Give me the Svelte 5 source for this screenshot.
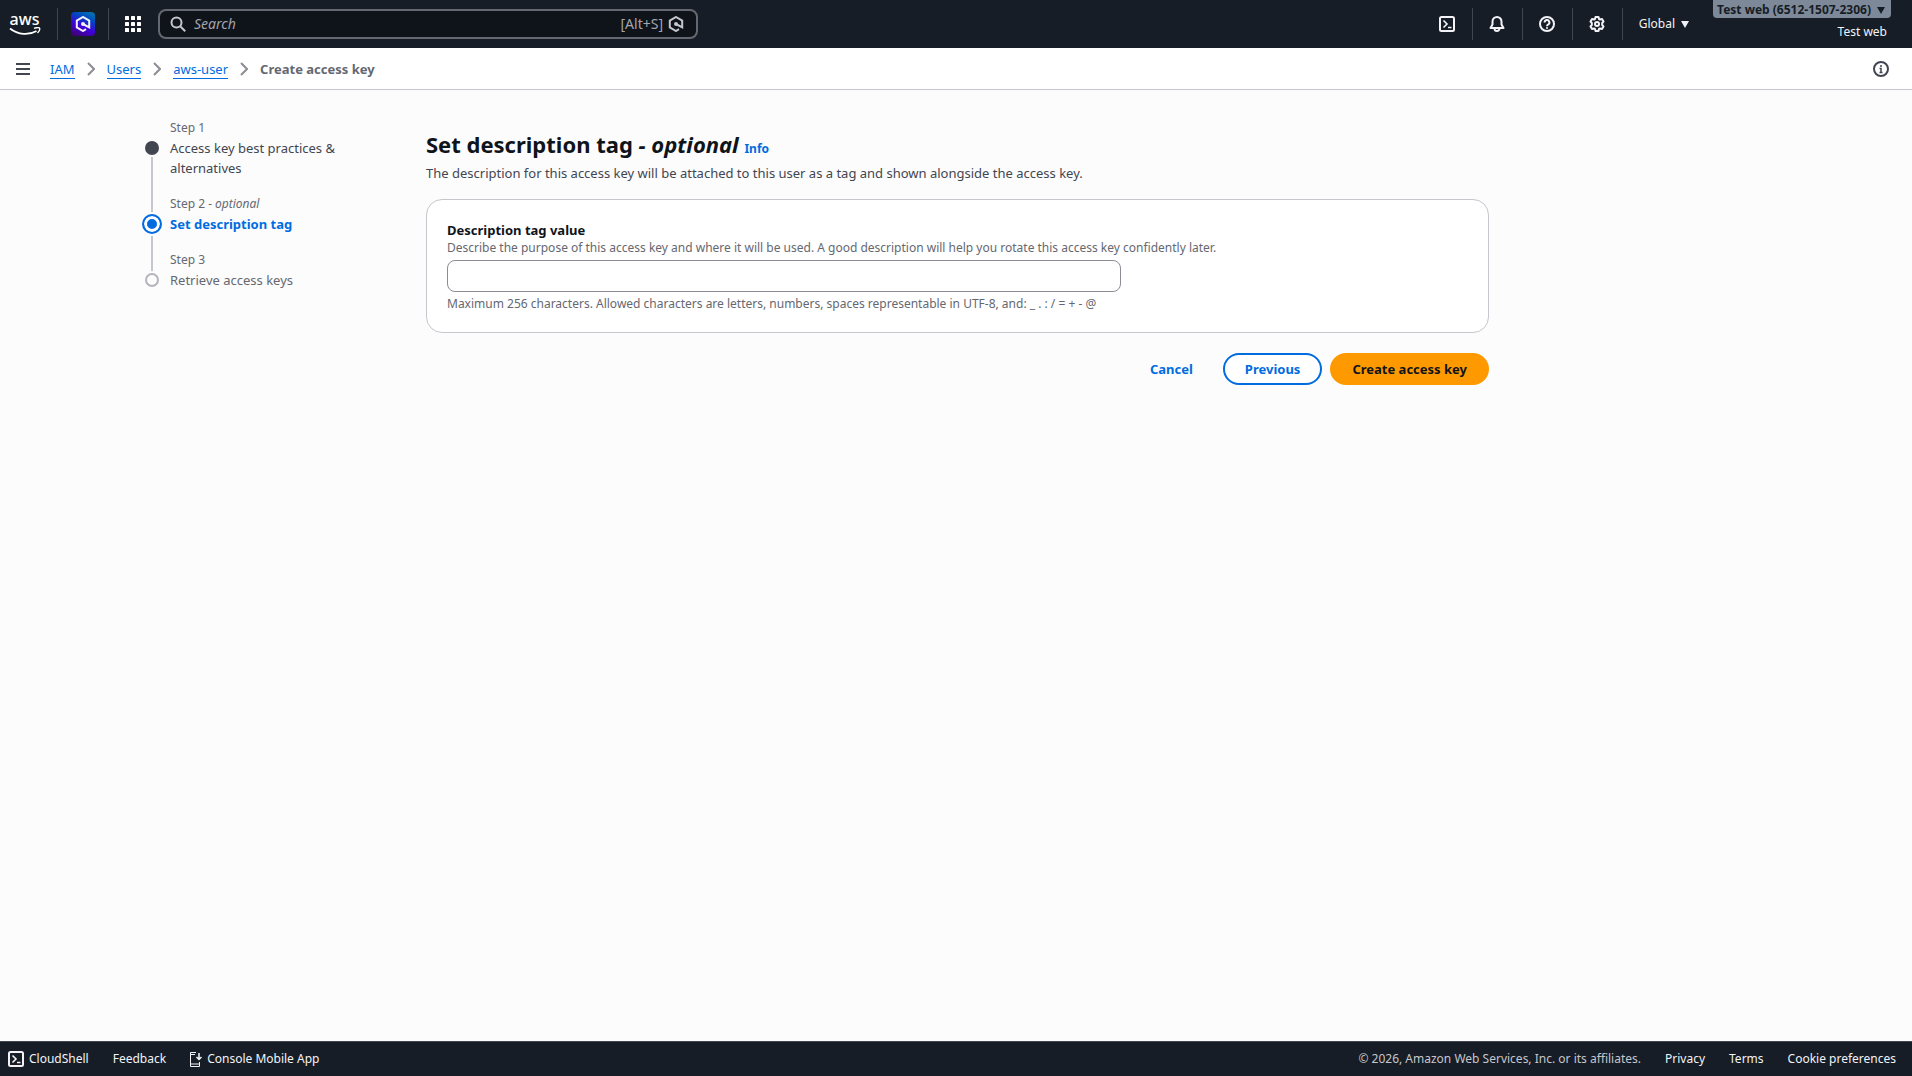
<script>
	let search = $state('');
	let description = $state('');

	const crumbs = ['IAM', 'Users', 'aws-user'];

	const steps = [
		{ label: 'Step 1', title: 'Access key best practices & alternatives', status: 'visited' },
		{ label: 'Step 2', optional: true, title: 'Set description tag', status: 'active' },
		{ label: 'Step 3', title: 'Retrieve access keys', status: 'upcoming' }
	];
</script>

{#snippet shellIcon()}
	<svg class="icon" viewBox="0 0 16 16">
		<rect x="1" y="1" width="14" height="14" rx="1.5" />
		<path d="M4.5 4.5 8 8 4.5 11.5M9 11.5H12.5" stroke-width="1.6" />
	</svg>
{/snippet}

{#snippet hexIcon()}
	<svg class="icon" viewBox="0 0 16 16">
		<path d="M11 13.2 8 15 1.8 11.4V4.6L8 1l6.2 3.6v6.8L8 8" />
		<circle cx="8" cy="8" r="1" />
	</svg>
{/snippet}

{#snippet caret()}
	<svg width="8" height="7" viewBox="0 0 8 7"><path d="M0 0H8L4 7Z" fill="currentColor" /></svg>
{/snippet}

<div class="page">
	<header class="topbar">
		<a class="cell logo" href="#home" aria-label="AWS home">
			<span class="aws">aws</span>
			<svg width="32" height="8" viewBox="0 0 32 8">
				<path d="M1 1.5C9 8 20 8.5 27.5 4" fill="none" stroke="#fff" stroke-width="1.8" />
				<path d="M25 1.3C27.500 .5 30 .3 30.5 1.200S30 4.500 28.500 6" fill="none" stroke="#fff" stroke-width="1.4" />
			</svg>
		</a>
		<button class="cell assistant" aria-label="Amazon Q">
			<span class="tile">{@render hexIcon()}</span>
		</button>
		<button class="cell apps" aria-label="Services">
			<svg width="16" height="16" viewBox="0 0 16 16" fill="#fff">
				{#each [0, 6, 12] as y}
					{#each [0, 6, 12] as x}
						<rect {x} {y} width="4" height="4" rx="0.5" />
					{/each}
				{/each}
			</svg>
		</button>
		<div class="search">
			<svg class="icon" viewBox="0 0 16 16">
				<circle cx="6.5" cy="6.5" r="5" />
				<path d="m10.2 10.2 5 5" />
			</svg>
			<input type="text" placeholder="Search" aria-label="Search" bind:value={search} />
			<span>[Alt+S]</span>
			{@render hexIcon()}
		</div>

		<nav class="tools" aria-label="Tools">
			<button class="cell tool" aria-label="Open CloudShell">{@render shellIcon()}</button>
			<button class="cell tool" aria-label="Notifications">
				<svg class="icon" viewBox="0 0 16 16">
					<path d="M1.5 12H14.5L12.5 8.5V5.500A4.500 4.500 0 0 0 3.500 5.500V8.500Z" stroke-linejoin="round" />
					<path d="M5.5 12.5a2.500 2.500 0 0 0 5 0" />
				</svg>
			</button>
			<button class="cell tool" aria-label="Help">
				<svg class="icon" viewBox="0 0 16 16">
					<circle cx="8" cy="8" r="7" />
					<path d="M5.6 6.500a2.400 2.400 0 1 1 3.600 2C8.300 9 8 9.300 8 10.200M8 11.200v1.600" />
				</svg>
			</button>
			<button class="cell tool" aria-label="Settings">
				<svg class="icon" viewBox="0 0 16 16">
					<path
						d="M6.5 1H9.5L10 3 11 3.5 13 3 14.5 5.5 13.2 7V9L14.5 10.5 13 13 11 12.5 10 13 9.5 15H6.5L6 13 5 12.5 3 13 1.5 10.5 2.8 9V7L1.5 5.5 3 3 5 3.5 6 3Z"
						stroke-linejoin="round"
					/>
					<circle cx="8" cy="8" r="2" />
				</svg>
			</button>
			<button class="region">Global {@render caret()}</button>
			<div class="account">
				<button class="badge">Test web (6512-1507-2306) {@render caret()}</button>
				<span>Test web</span>
			</div>
		</nav>
	</header>

	<div class="subbar">
		<button class="plain" aria-label="Open navigation">
			<svg class="icon" viewBox="0 0 16 16"><path d="M1 3H15M1 8H15M1 13H15" /></svg>
		</button>
		<nav class="crumbs" aria-label="Breadcrumbs">
			{#each crumbs as crumb}
				<a href="#{crumb}">{crumb}</a>
				<svg width="8" height="14" viewBox="0 0 8 14">
					<path d="m1 1 6 6-6 6" fill="none" stroke="#8c8c94" stroke-width="2" />
				</svg>
			{/each}
			<strong>Create access key</strong>
		</nav>
		<button class="plain" aria-label="Open help panel">
			<svg class="icon" viewBox="0 0 16 16">
				<circle cx="8" cy="8" r="7" />
				<path d="M8 4V6M6.5 7.5H8V11M6.5 11.5H9.5" stroke-width="1.5" />
			</svg>
		</button>
	</div>

	<main>
		<ol class="steps">
			{#each steps as step}
				<li class={step.status}>
					<span class="track"><span class="dot"></span></span>
					<div class="step">
						<small>{step.label}{#if step.optional}<i>{' '}- optional</i>{/if}</small>
						<span class="title">{step.title}</span>
					</div>
				</li>
			{/each}
		</ol>

		<form class="content" onsubmit={(e) => e.preventDefault()}>
			<h1>Set description tag <i>- optional</i> <a href="#info">Info</a></h1>
			<p class="lead">
				The description for this access key will be attached to this user as a tag and shown alongside
				the access key.
			</p>
			<section class="panel">
				<label for="description">Description tag value</label>
				<p id="hint">
					Describe the purpose of this access key and where it will be used. A good description will
					help you rotate this access key confidently later.
				</p>
				<input id="description" type="text" aria-describedby="hint limits" bind:value={description} />
				<p id="limits">
					Maximum 256 characters. Allowed characters are letters, numbers, spaces representable in
					UTF-8, and: _ . : / = + - @
				</p>
			</section>
			<div class="actions">
				<button type="button" class="btn">Cancel</button>
				<button type="button" class="btn outlined">Previous</button>
				<button type="submit" class="btn primary">Create access key</button>
			</div>
		</form>
	</main>

	<footer>
		<a href="#cloudshell">{@render shellIcon()}CloudShell</a>
		<a href="#feedback">Feedback</a>
		<a href="#mobile">
			<svg width="12" height="15" viewBox="0 0 12 15" fill="none" stroke="currentColor">
				<path d="M6 .5H.5V14.5H9.5V10M.5 2.5H5M.5 12H9.5" />
				<path d="M9 1V7M6.5 5 9 7.5 11.5 5" stroke-width="1.5" />
			</svg>
			Console Mobile App
		</a>
		<span class="copyright">© 2026, Amazon Web Services, Inc. or its affiliates.</span>
		<a href="#privacy">Privacy</a>
		<a href="#terms">Terms</a>
		<a href="#cookies">Cookie preferences</a>
	</footer>
</div>

<style>
	:global(body) {
		margin: 0;
	}

	.page {
		display: flex;
		flex-direction: column;
		min-height: 100vh;
		background: #fcfcfd;
		color: #0f141a;
		font: 13px/20px 'Noto Sans', sans-serif;
	}

	.page :global(*) {
		box-sizing: border-box;
	}

	button {
		padding: 0;
		border: 0;
		background: none;
		color: inherit;
		font: inherit;
		cursor: pointer;
	}

	a {
		color: #006ce0;
		text-decoration: none;
	}

	p {
		margin: 0;
	}

	svg {
		display: block;
		flex: none;
	}

	.icon {
		width: 16px;
		height: 16px;
		fill: none;
		stroke: currentColor;
		stroke-width: 2;
	}

	.topbar {
		display: flex;
		align-items: center;
		height: 48px;
		background: #161d26;
		color: #f3f3f7;
	}

	.cell {
		display: flex;
		align-items: center;
		justify-content: center;
		height: 32px;
		border-right: 1px solid #424650;
	}

	.logo {
		flex-direction: column;
		width: 58px;
		padding-right: 8px;
		color: #fff;
	}

	.aws {
		height: 14px;
		font-size: 16px;
		font-weight: 500;
		line-height: 12px;
	}

	.assistant {
		width: 51px;
	}

	.tile {
		display: grid;
		place-items: center;
		width: 24px;
		height: 24px;
		border-radius: 4px;
		background: linear-gradient(25deg, #400070 5%, #4000d8 40%, #0048c0 70%, #0080b0);
	}

	.apps {
		width: 49px;
		padding-right: 2px;
		border: 0;
	}

	.search {
		display: flex;
		align-items: center;
		flex: 0 1 540px;
		height: 30px;
		padding: 0 12px 0 10px;
		border: 2px solid #656871;
		border-radius: 8px;
		background: #0f141a;
		color: #c6c6cd;
		font-size: 14px;
	}

	.search input {
		flex: 1;
		min-width: 0;
		margin: 0 8px;
		padding: 0;
		border: 0;
		outline: 0;
		background: none;
		color: inherit;
		font: inherit;
	}

	.search input::placeholder {
		color: #a4a4ad;
		font-style: italic;
	}

	.search span {
		margin-right: 5px;
		color: #a4a4ad;
	}

	.tools {
		display: flex;
		align-items: center;
		margin-left: auto;
		padding-right: 21px;
		font-size: 12px;
	}

	.tool {
		width: 50px;
	}

	.region {
		display: flex;
		align-items: center;
		gap: 6px;
		padding: 0 24px 0 16px;
	}

	.account {
		display: flex;
		flex-direction: column;
		align-items: flex-end;
		height: 48px;
	}

	.account span {
		padding: 4px 4px 0 0;
	}

	.badge {
		display: flex;
		align-items: center;
		gap: 6px;
		height: 18px;
		padding: 2px 6px 0 4px;
		border-radius: 0 0 4px 4px;
		background: #7d8998;
		color: #161d26;
		font-weight: 700;
	}

	.subbar {
		display: flex;
		align-items: center;
		height: 42px;
		padding: 0 23px 0 15px;
		border-bottom: 1px solid #c6c6cd;
		background: #fff;
	}

	.plain {
		color: #424650;
	}

	.crumbs {
		display: flex;
		flex: 1;
		align-items: center;
		gap: 12px;
		margin-left: 19px;
	}

	.crumbs a {
		height: 20px;
		border-bottom: 1px solid #006ce0;
	}

	.crumbs strong {
		color: #656871;
	}

	main {
		display: grid;
		grid-template-columns: 284px minmax(0, 1063px);
		flex: 1;
		align-content: start;
		padding: 30px 40px 40px 142px;
	}

	.steps {
		width: 220px;
		margin: 0;
		padding: 0;
		list-style: none;
	}

	.steps li {
		display: flex;
		gap: 8px;
	}

	/* the connector runs from this dot down to the next one */
	.track {
		display: flex;
		flex: none;
		flex-direction: column;
		align-items: center;
		width: 20px;
		margin: 21px 0 -19px;
	}

	.track::after {
		content: '';
		flex: 1;
		width: 2px;
		background: #c6c6cd;
	}

	li:last-child .track::after {
		display: none;
	}

	.dot {
		width: 14px;
		height: 14px;
		margin: 0 0 2px;
		border: 2px solid #b4b4bb;
		border-radius: 50%;
	}

	.visited .dot {
		border-color: #424650;
		background: #424650;
	}

	.visited .track {
		margin-bottom: -16px;
	}

	.active .track {
		margin-top: 18px;
	}

	.active .dot {
		width: 20px;
		height: 20px;
		border-color: #006ce0;
		background: #006ce0;
		box-shadow: inset 0 0 0 3px #fff;
	}

	.step {
		padding-bottom: 18px;
	}

	small {
		display: block;
		margin-bottom: 2px;
		color: #656871;
		font-size: 12px;
		line-height: 16px;
	}

	.title {
		display: block;
		color: #424650;
	}

	.active .title {
		color: #006ce0;
		font-weight: 700;
	}

	.upcoming .title {
		color: #656871;
	}

	h1 {
		margin: 8px 0 3px;
		font-size: 22px;
		line-height: 32px;
	}

	h1 a {
		font-size: 12px;
		line-height: 16px;
	}

	.lead {
		margin-bottom: 16px;
		color: #424650;
	}

	.panel {
		padding: 20px;
		border: 1px solid #c6c6cd;
		border-radius: 16px;
		background: #fff;
	}

	.panel label {
		display: block;
		font-weight: 700;
	}

	.panel p {
		color: #656871;
		font-size: 12px;
		line-height: 16px;
	}

	.panel input {
		display: block;
		width: 66%;
		height: 32px;
		margin: 4px 0;
		padding: 4px 12px;
		border: 1px solid #8c8c94;
		border-radius: 8px;
		background: #fff;
		font: inherit;
	}

	.actions {
		display: flex;
		justify-content: flex-end;
		gap: 8px;
		margin-top: 20px;
	}

	.btn {
		height: 32px;
		padding: 0 20px;
		border: 2px solid transparent;
		border-radius: 16px;
		color: #006ce0;
		font-weight: 700;
	}

	.outlined {
		border-color: #006ce0;
		background: #fff;
	}

	.primary {
		border-color: #ff9900;
		background: #ff9900;
		color: #0f141a;
	}

	footer {
		display: flex;
		align-items: center;
		gap: 24px;
		height: 35px;
		padding: 0 16px 0 8px;
		border-top: 1px solid #424650;
		background: #161d26;
		font-size: 12px;
	}

	footer a {
		display: flex;
		align-items: center;
		gap: 5px;
		color: #f3f3f7;
	}

	.copyright {
		margin-left: auto;
		color: #c6c6cd;
	}
</style>
